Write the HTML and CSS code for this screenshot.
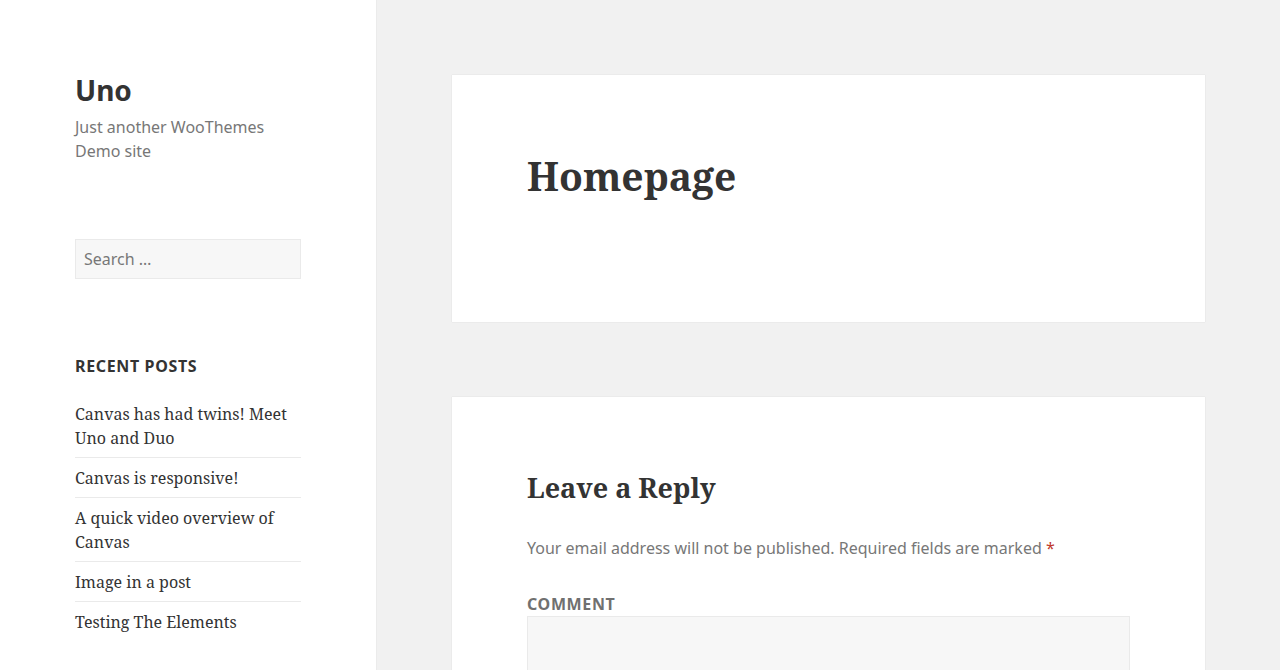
FILE: index.html
```html
<!DOCTYPE html>
<html lang="en">
<head>
  <meta charset="UTF-8">
  <title>Homepage | Uno</title>
  <meta name="viewport" content="width=device-width, initial-scale=1.0">
  <link rel="stylesheet" href="styles.css">
</head>
<body>
  <div class="site">
    <!-- sidebar -->
    <aside class="sidebar">
      <div class="site-branding">
        <div class="site-title">Uno</div>
        <div class="site-description">Just another WooThemes Demo site</div>
      </div>
      <div class="widget widget-search">
        <input type="search" class="search-field" placeholder="Search …">
      </div>
      <div class="widget widget-recent">
        <div class="widget-title">Recent Posts</div>
        <ul class="recent-list">
          <li><a href="#">Canvas has had twins! Meet Uno and Duo</a></li>
          <li><a href="#">Canvas is responsive!</a></li>
          <li><a href="#">A quick video overview of Canvas</a></li>
          <li><a href="#">Image in a post</a></li>
          <li><a href="#">Testing The Elements</a></li>
        </ul>
      </div>
    </aside>

    <!-- content -->
    <main class="content">
      <article class="card page-card">
        <h1 class="entry-title">Homepage</h1>
      </article>
      <section class="card comment-card">
        <h2 class="reply-title">Leave a Reply</h2>
        <p class="comment-notes">Your email address will not be published. Required fields are marked <span class="required">*</span></p>
        <label class="field-label" for="comment">Comment</label>
        <textarea id="comment" class="comment-field" rows="8"></textarea>
      </section>
    </main>
  </div>
</body>
</html>
```

FILE: styles.css
```css
body {
  margin: 0;
  background: #f1f1f1;
  color: #333333;
  font-family: 'Noto Serif', 'DejaVu Serif', serif;
  font-size: 16px;
  line-height: 1.5;
  overflow: hidden;
}
.site {
  display: flex;
  align-items: flex-start;
  min-height: 100vh;
}
.sidebar {
  box-sizing: border-box;
  width: 376px;
  flex-shrink: 0;
  min-height: 100vh;
  background: #ffffff;
  box-shadow: 0 0 1px rgba(0, 0, 0, 0.15);
  padding: 73px 75px 0 75px;
}
.site-title {
  font-family: 'Noto Sans', sans-serif;
  font-size: 28px;
  font-weight: 700;
  line-height: 35px;
  color: #333333;
}
.site-description {
  font-family: 'Noto Sans', sans-serif;
  font-size: 16px;
  line-height: 24px;
  color: #777777;
  margin-top: 7px;
}
.widget {
  margin-top: 76px;
}
.widget-recent {
  margin-top: 75px;
}
.search-field {
  box-sizing: border-box;
  display: block;
  width: 100%;
  height: 40px;
  padding: 0 8px;
  border: 1px solid #eaeaea;
  border-radius: 0;
  background: #f7f7f7;
  font-family: 'Noto Sans', sans-serif;
  font-size: 16px;
  color: #333333;
  outline: none;
}
.search-field::placeholder {
  color: #777777;
}
.widget-title {
  font-family: 'Noto Sans', sans-serif;
  font-size: 16px;
  font-weight: 700;
  line-height: 24px;
  letter-spacing: 0.04em;
  text-transform: uppercase;
  margin-bottom: 16px;
}
.recent-list {
  list-style: none;
  margin: 0;
  padding: 0;
}
.recent-list li {
  border-top: 1px solid #eaeaea;
  padding: 8px 0 7px;
  line-height: 24px;
}
.recent-list li:first-child {
  border-top: 0;
}
.recent-list a {
  color: #333333;
  text-decoration: none;
}
.content {
  flex: 1;
  padding: 75px 75px 0 76px;
  display: flex;
  flex-direction: column;
  gap: 75px;
}
.card {
  background: #ffffff;
  box-shadow: 0 0 1px rgba(0, 0, 0, 0.15);
  padding: 0 75px;
}
.page-card {
  padding-top: 77px;
  padding-bottom: 74px;
}
.entry-title {
  margin: 0 0 48px;
  font-size: 39px;
  font-weight: 700;
  line-height: 48px;
}
.comment-card {
  padding-top: 73px;
}
.reply-title {
  margin: 0 0 30px;
  font-size: 27px;
  font-weight: 700;
  line-height: 36px;
}
.comment-notes {
  margin: 0 0 32px;
  font-family: 'Noto Sans', sans-serif;
  color: #777777;
  line-height: 24px;
}
.required {
  color: #c0392b;
}
.field-label {
  display: block;
  font-family: 'Noto Sans', sans-serif;
  font-weight: 700;
  line-height: 24px;
  letter-spacing: 0.04em;
  text-transform: uppercase;
  color: #707070;
}
.comment-field {
  box-sizing: border-box;
  display: block;
  width: 100%;
  height: 200px;
  border: 1px solid #eaeaea;
  background: #f7f7f7;
  resize: none;
}
```
